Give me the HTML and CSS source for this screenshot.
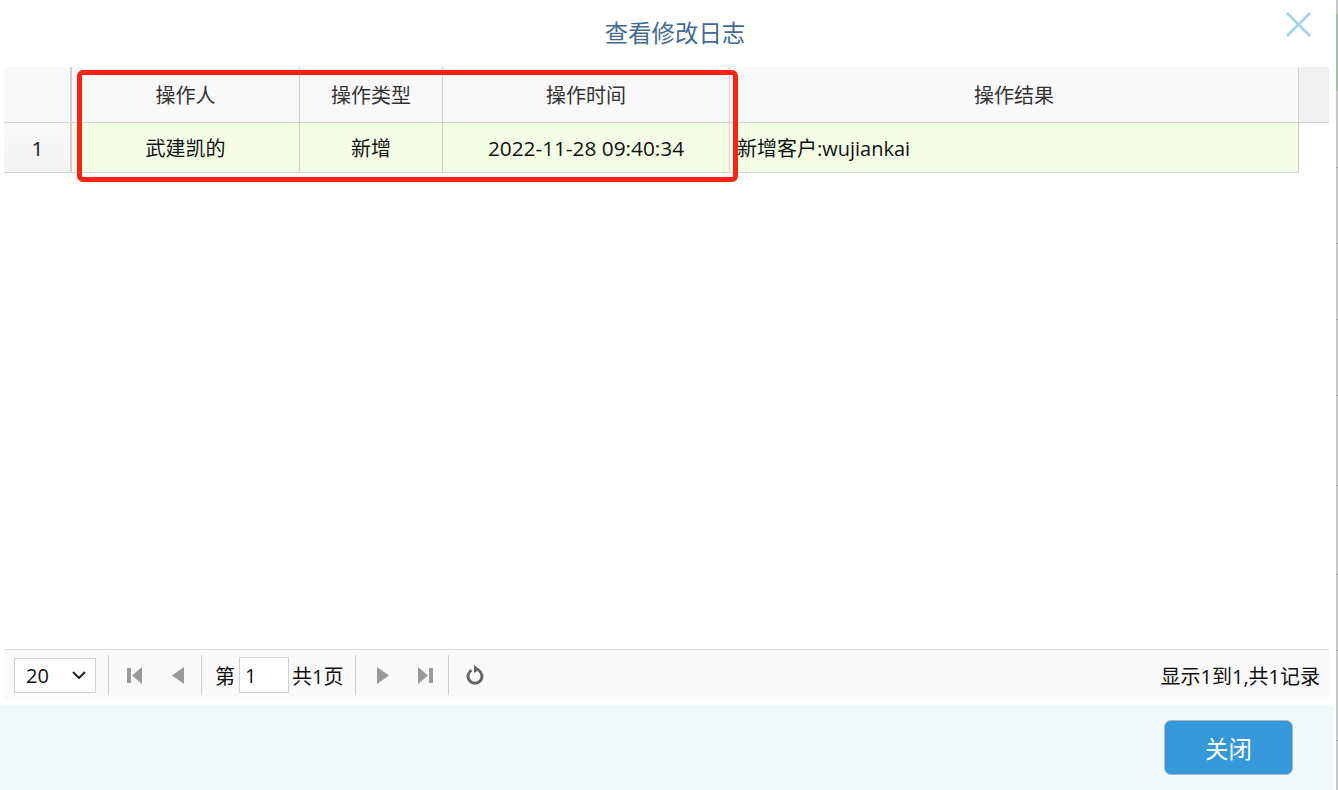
FILE: index.html
```html
<!DOCTYPE html>
<html lang="zh">
<head>
<meta charset="utf-8">
<title>查看修改日志</title>
<link rel="stylesheet" href="styles.css">
</head>
<body>
<div class="screen">
  <div class="dialog">
    <header class="head">
      <h1 class="title">查看修改日志</h1>
      <svg class="close" width="27" height="27" viewBox="0 0 27 27"><path d="M2 2 25 25M25 2 2 25"/></svg>
    </header>
    <div class="panel">
      <div class="grid">
        <div class="row hrow">
          <div class="cell rn"></div>
          <div class="cell">操作人</div>
          <div class="cell">操作类型</div>
          <div class="cell">操作时间</div>
          <div class="cell">操作结果</div>
          <div class="cell filler"></div>
        </div>
        <div class="row drow">
          <div class="cell rn">1</div>
          <div class="cell">武建凯的</div>
          <div class="cell">新增</div>
          <div class="cell date">2022-11-28 09:40:34</div>
          <div class="cell left">新增客户:wujiankai</div>
        </div>
      </div>
      <div class="pager">
        <div class="select"><span>20</span>
          <svg width="14" height="8" viewBox="0 0 14 8"><path d="M1 1 7 7 13 1"/></svg>
        </div>
        <i class="sep s1"></i>
        <svg class="ico first" width="15" height="17" viewBox="0 0 15 17"><path d="M0 1H4V16H0ZM15 0V17L5 8.500Z"/></svg>
        <svg class="ico prev" width="12" height="17" viewBox="0 0 12 17"><path d="M12 0V17L0 8.500Z"/></svg>
        <i class="sep s2"></i>
        <span class="t t1">第</span>
        <span class="pg">1</span>
        <span class="t t2">共1页</span>
        <i class="sep s3"></i>
        <svg class="ico next" width="12" height="17" viewBox="0 0 12 17"><path d="M0 0V17L12 8.500Z"/></svg>
        <svg class="ico last" width="15" height="17" viewBox="0 0 15 17"><path d="M0 0V17L10 8.500ZM11 1H15V16H11Z"/></svg>
        <i class="sep s4"></i>
        <svg class="refresh" width="18" height="20" viewBox="0 0 18 20"><path class="ring" d="M5.500 5.200A7 7 0 1 0 12.500 5.200"/><path class="tip" d="M8 0 14 4.500 8 8Z"/></svg>
        <span class="summary">显示1到1,共1记录</span>
      </div>
    </div>
    <footer class="foot"><button class="btn" type="button">关闭</button></footer>
  </div>
  <div class="strip"></div>
  <div class="mark"></div>
</div>
</body>
</html>
```
FILE: styles.css
```css
html, body { margin: 0; padding: 0; background: #fff; }
body { font-family: "Open Sans", "Noto Sans CJK SC", sans-serif; color: #111; overflow: hidden; }
.screen { position: relative; display: flex; width: 1338px; height: 790px; overflow: hidden; }
.dialog { width: 1336px; display: flex; flex-direction: column; }
.strip {
  width: 2px;
  background: linear-gradient(
    #c6c6c6 0 14px, #a3c2a3 14px 91px, #c8c8c8 91px 167px,
    #a8a8a8 167px 168px, #c8c8c8 168px 243px,
    #a8a8a8 243px 244px, #c8c8c8 244px 319px,
    #a8a8a8 319px 320px, #c8c8c8 320px 395px,
    #a8a8a8 395px 396px, #c8c8c8 396px 485px,
    #a8a8a8 485px 486px, #c8c8c8 486px 574px,
    #a8a8a8 574px 575px, #c8c8c8 575px 650px,
    #a8a8a8 650px 651px, #c8c8c8 651px 740px,
    #a8a8a8 740px 741px, #c8c8c8 741px);
}
.head { height: 67px; position: relative; display: flex; justify-content: center; padding-left: 14px; }
.title { margin: 16px 0 0; font-size: 23.400px; font-weight: 400; line-height: 34px; color: #3f6b98; }
.close { position: absolute; top: 11px; right: 24px; }
.close path { fill: none; stroke: #a3d2f0; stroke-width: 2.500; }
.panel { flex: 1; display: flex; flex-direction: column; margin: 0 7px 0 4px; }
.grid { flex: 1; font-size: 20px; }
.row { display: grid; grid-template-columns: 68px 228px 143px 287px 569px 30px; }
.cell {
  display: flex; align-items: center; justify-content: center;
  box-sizing: border-box; border-right: 1px solid #cfcfcf; border-bottom: 1px solid #d4d4d4;
  white-space: nowrap;
}
.hrow { height: 56px; color: #333; }
.hrow .cell { background: #f9f9f9; }
.drow { height: 50px; }
.drow .cell { background: #f4fee4; }
.date { font-size: 20.800px; }
.hrow .rn { background: #f9f9f9; }
.rn { border-right-width: 2px; border-right-color: #d0d0d0; padding-left: 1px; }
.drow .rn { background: linear-gradient(#fafafa, #f2f2f2); font-size: 20.800px; }
.hrow .filler { background: #f0f0f0; border-right: 0; }
.left { justify-content: flex-start; padding-left: 7px; }
.pager {
  height: 51px; box-sizing: border-box; flex: none; position: relative;
  display: flex; align-items: center; background: #fafafa; border-top: 1px solid #dedede; font-size: 20px;
}
.select {
  box-sizing: border-box; width: 82px; height: 35px; margin-left: 10px; padding: 0 9px 0 11px;
  display: flex; align-items: center; justify-content: space-between;
  background: #fff; border: 1px solid #d0d0d0; font-size: 20px;
}
.select path { fill: none; stroke: #222; stroke-width: 2; }
.sep { width: 1px; height: 40px; background: #cfcfcf; flex: none; }
.s1 { margin-left: 12px; }
.ico { fill: #999; flex: none; }
.first { margin-left: 18px; }
.prev { margin-left: 30px; }
.s2 { margin-left: 17px; }
.t1 { margin-left: 13px; }
.pg {
  box-sizing: border-box; width: 50px; height: 36px; margin-left: 4px; padding-left: 5px;
  display: flex; align-items: center; background: #fff; border: 1px solid #d0d0d0;
}
.t2 { margin-left: 3px; }
.s3 { margin-left: 12px; }
.next { margin-left: 21px; }
.last { margin-left: 29px; }
.s4 { margin-left: 15px; }
.refresh { margin-left: 17px; flex: none; }
.ring { fill: none; stroke: #666; stroke-width: 3; }
.tip { fill: #666; }
.summary { margin-left: auto; margin-right: 9px; }
.foot {
  height: 85px; margin: 5px 2px 0 0; box-sizing: border-box; padding: 15px 41px 0 0;
  display: flex; justify-content: flex-end; align-items: flex-start; background: #f2f9fc;
}
.btn {
  width: 129px; height: 55px; padding: 0; border: 1px solid #a9b8c4; border-radius: 7px;
  background: #3498db; color: #fff; font: inherit; font-size: 23.400px;
}
.mark {
  position: absolute; left: 77px; top: 70px; width: 661px; height: 112px; box-sizing: border-box;
  border: 5px solid #ff2213; border-radius: 6px;
}
```
